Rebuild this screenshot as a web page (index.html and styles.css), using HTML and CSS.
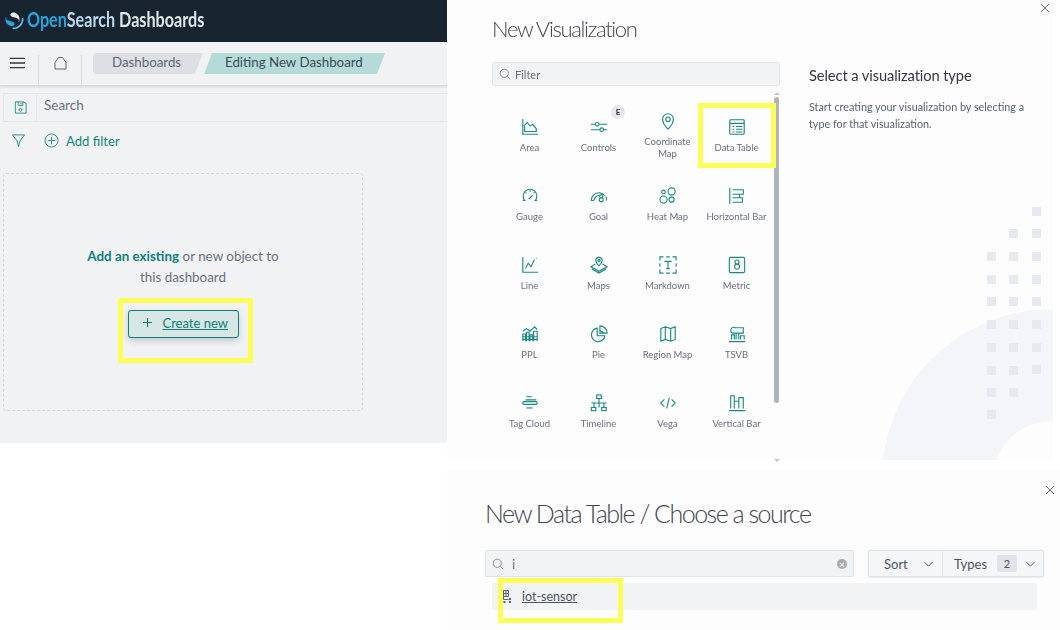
FILE: index.html
```html
<!DOCTYPE html>
<html lang="en">
<head>
<meta charset="utf-8">
<title>OpenSearch Dashboards</title>
<link rel="stylesheet" href="styles.css">
</head>
<body>
<section class="window win-dash">
  <header class="brandbar">
    <svg class="logo" viewBox="0 0 20 20"><path d="M18.6 7.4c-.5 0-.9.4-.9.9 0 5-4 9-9 9-.5 0-.9.4-.9.9s.4.9.9.9c6 0 10.800-4.900 10.800-10.800 0-.5-.4-.9-.9-.9z" fill="#5ec3ea"/><path d="M14.300 12c.6-1 1.200-2.300 1-4.100C15 4.100 11.500 1.300 8.200 1.600 6.900 1.700 5.600 2.800 5.700 4.200c0 .6.300 1 .8 1.300 1 .6 2.300.9 3.800 1.400 1.800.5 3.100 1 4 2 .4.700.3 1.900 0 3.100z" fill="#e8f1f6"/><path d="M1.500 5.500C.9 6.500.3 7.800.5 9.600c.3 3.800 3.800 6.600 7.100 6.300 1.300-.1 2.600-1.200 2.500-2.600 0-.6-.3-1-.8-1.300-1-.6-2.300-.9-3.800-1.400-1.800-.5-3.100-1-4-2-.4-.7-.3-1.900 0-3.100z" fill="#26a5dc"/></svg>
    <span class="brand"><span class="brand-open">Open</span><span class="brand-search">Search</span> Dashboards</span>
  </header>
  <nav class="navrow">
    <div class="navcell cell-menu"><svg class="ic-menu" viewBox="0 0 16 12"><path d="M0 1h16M0 6h16M0 11h16" stroke="#343741" stroke-width="1.400" fill="none"/></svg></div>
    <div class="navcell cell-home"><svg class="ic-home" viewBox="0 0 13 14"><path d="M1 13V6.500L4.500 1.500h4L12 6.500V13z" stroke="#5a6875" stroke-linejoin="round" fill="none"/></svg></div>
    <div class="crumbs">
      <span class="crumb crumb-a">Dashboards</span>
      <span class="crumb crumb-b">Editing New Dashboard</span>
    </div>
  </nav>
  <div class="searchrow">
    <div class="savecell"><svg class="ic16" viewBox="0 0 16 16"><path d="M2.500 2h9.500l2 2v10h-11.500zM5.500 2v4h5V2M8.500 3v2" stroke="#2a8f85" fill="none"/><circle cx="8" cy="10.500" r="1.500" stroke="#2a8f85" fill="none"/></svg></div>
    <div class="searchtext">Search</div>
  </div>
  <div class="filterrow">
    <svg class="ic16" viewBox="0 0 16 16"><path d="M1.500 2h13L9.500 8.500 8 14.500 6.500 8.500z" stroke="#1f8f85" fill="none"/></svg>
    <span class="addfilter"><svg class="ic15" viewBox="0 0 16 16"><circle cx="8" cy="8" r="7" stroke="#1f8f85" fill="none"/><path d="M8 4v8M4 8h8" stroke="#1f8f85" fill="none"/></svg>Add filter</span>
  </div>
  <div class="emptybox">
    <p class="emptytext"><b>Add an existing</b> or new object to<br>this dashboard</p>
    <button class="createbtn"><svg class="ic10" viewBox="0 0 10 10"><path d="M5 0v10M0 5h10" stroke="#0f7a70" stroke-width="1.200" fill="none"/></svg><span>Create new</span></button>
  </div>
  <div class="mark mark-create"></div>
</section>

<section class="window win-vis">
  <svg class="decor" viewBox="0 0 606 460">
    <path d="M436 460A170 170 0 0 1 606 309V421A60 60 0 0 0 549 460Z" fill="#f4f5f9"/>
    <g fill="#e6e9f0">
      <rect x="585" y="207" width="9" height="9"/>
      <rect x="562" y="229" width="9" height="9"/><rect x="585" y="229" width="9" height="9"/>
      <rect x="540" y="252" width="9" height="9"/><rect x="562" y="252" width="9" height="9"/><rect x="585" y="252" width="9" height="9"/>
      <rect x="540" y="275" width="9" height="9"/><rect x="562" y="275" width="9" height="9"/><rect x="585" y="275" width="9" height="9"/>
      <rect x="540" y="297" width="9" height="9"/><rect x="562" y="297" width="9" height="9"/><rect x="585" y="297" width="9" height="9"/>
      <rect x="540" y="320" width="9" height="9"/><rect x="562" y="320" width="9" height="9"/><rect x="585" y="320" width="9" height="9"/>
      <rect x="540" y="343" width="9" height="9"/><rect x="562" y="343" width="9" height="9"/><rect x="585" y="343" width="9" height="9"/>
      <rect x="540" y="366" width="9" height="9"/><rect x="562" y="366" width="9" height="9"/><rect x="585" y="365" width="9" height="9"/>
      <rect x="540" y="388" width="9" height="9"/><rect x="562" y="388" width="9" height="9"/>
      <rect x="540" y="410" width="9" height="9"/>
    </g>
  </svg>
  <div class="vis-main">
    <h1 class="vis-title">New Visualization</h1>
    <div class="filterinput"><svg class="ic12" viewBox="0 0 16 16"><circle cx="7" cy="7" r="5.500" stroke="#69707d" fill="none"/><path d="M11 11l4 4" stroke="#69707d" fill="none"/></svg><span>Filter</span></div>
    <div class="gridwrap">
      <div class="tiles">
        <div class="tile"><svg class="vi" viewBox="0 0 20 20"><path d="M2 1v17h17M4 15V8l3-3 3 4 3-2 4 5v3z"/></svg><span>Area</span></div>
        <div class="tile"><svg class="vi" viewBox="0 0 20 20"><path d="M1 7h5M10 7h9M1 13h10M15 13h4"/><circle cx="8" cy="7" r="2"/><circle cx="13" cy="13" r="2"/></svg><span>Controls</span><i class="badge">E</i></div>
        <div class="tile"><svg class="vi" viewBox="0 0 20 20"><path d="M10 19C6 15 4 11 4 8a6 6 0 0 1 12 0c0 3-2 7-6 11z"/><circle cx="10" cy="8" r="2.500"/></svg><span>Coordinate<br>Map</span></div>
        <div class="tile"><svg class="vi" viewBox="0 0 20 20"><rect x="2" y="2" width="16" height="16" rx="1"/><path d="M2 6h16M5 9.500h2M9 9.500h7M5 12.500h2M9 12.500h7M5 15.500h2M9 15.500h7"/></svg><span>Data Table</span></div>

        <div class="tile"><svg class="vi" viewBox="0 0 20 20"><path d="M4 15A7.500 7.500 0 0 1 2.500 10a7.500 7.500 0 0 1 15 0 7.500 7.500 0 0 1-1.500 5M2 15h3M15 15h3M10 4v1.500M5 6l1 1M15 6l-1 1M8.500 13.500L13 9"/></svg><span>Gauge</span></div>
        <div class="tile"><svg class="vi" viewBox="0 0 20 20"><path d="M1.500 15a8.500 8.500 0 0 1 15-5.500M17.500 10.500a8.500 8.500 0 0 1 1 4.500M4.500 15a5.500 5.500 0 0 1 5.500-5.500M1 15h3"/><path d="M12.500 8.500a1.800 1.800 0 1 1 0 3.600 1.800 1.800 0 1 1 0-3.600zm0 3.600a2.200 2.200 0 1 1 0 4.400 2.200 2.200 0 1 1 0-4.400z"/></svg><span>Goal</span></div>
        <div class="tile"><svg class="vi" viewBox="0 0 20 20"><circle cx="14" cy="5" r="4"/><circle cx="5" cy="5.500" r="2"/><circle cx="5" cy="14" r="4"/><circle cx="14" cy="14" r="2.800"/></svg><span>Heat Map</span></div>
        <div class="tile"><svg class="vi" viewBox="0 0 20 20"><path d="M2 1v18M5 3h12v5H5M5 8h8v4H5M5 12h11v5H5"/></svg><span>Horizontal Bar</span></div>

        <div class="tile"><svg class="vi" viewBox="0 0 20 20"><path d="M2 1v17h17M5 14l3-6 3 4 4-8M17 2l.5.5"/></svg><span>Line</span></div>
        <div class="tile"><svg class="vi" viewBox="0 0 20 20"><path d="M10 11C7.500 8.500 6.500 7 6.500 5a3.500 3.500 0 0 1 7 0c0 2-1 3.500-3.500 6z"/><circle cx="10" cy="5" r="1.200"/><path d="M6 9l-5 3 9 5 9-5-5-3M2 14.500l8 4.500 8-4.500"/></svg><span>Maps</span></div>
        <div class="tile"><svg class="vi" viewBox="0 0 20 20"><path d="M1 5V1h4M8 1h4M15 1h4v4M19 8v4M19 15v4h-4M12 19H8M5 19H1v-4M1 12V8M6 6h8M10 6v8M8 14h4"/></svg><span>Markdown</span></div>
        <div class="tile"><svg class="vi" viewBox="0 0 20 20"><rect x="1.500" y="1.500" width="17" height="17" rx="1.500"/><path d="M10 4.500a2 2 0 1 1 0 4.500 2 2 0 1 1 0-4.500zm0 4.500a2.500 2.500 0 1 1 0 5.500 2.500 2.500 0 1 1 0-5.500z"/></svg><span>Metric</span></div>

        <div class="tile"><svg class="vi" viewBox="0 0 20 20"><path d="M2 7l4-3 4 3 5-5 3 3M2 18V10h3v8M6 18V8h3v10M10 18v-7h3v7M14 18V7h4v11M2 13h16M2 16h16"/></svg><span>PPL</span></div>
        <div class="tile"><svg class="vi" viewBox="0 0 20 20"><path d="M8 3.500a7.500 7.500 0 1 0 8.500 8.500H8zM11 1v8h8a8 8 0 0 0-8-8zM11 6l5 3"/></svg><span>Pie</span></div>
        <div class="tile"><svg class="vi" viewBox="0 0 20 20"><path d="M7 2L2 4v14l5-2 6 2 5-2V2l-5 2zM7 2v14M13 4v14"/></svg><span>Region Map</span></div>
        <div class="tile"><svg class="vi" viewBox="0 0 20 20"><path d="M1 18.500h18M5 9a3 3 0 0 1 3-6h9v6zM4 16v-5h3v5M9 16V9h3v7M14 16v-4h4v4"/></svg><span>TSVB</span></div>

        <div class="tile"><svg class="vi" viewBox="0 0 20 20"><path d="M6 3h6M5 6.500h12"/><rect x="2" y="8.500" width="16" height="3" rx="1.500"/><path d="M6 15.500h7"/></svg><span>Tag Cloud</span></div>
        <div class="tile"><svg class="vi" viewBox="0 0 20 20"><rect x="7.500" y="1" width="5" height="4"/><path d="M10 5v10M1.500 10h17M4.500 10v5M15.500 10v5"/><rect x="1.500" y="15" width="5" height="3.500"/><rect x="13" y="15" width="5" height="3.500"/></svg><span>Timeline</span></div>
        <div class="tile"><svg class="vi" viewBox="0 0 20 20"><path d="M6 6l-4 4 4 4M14 6l4 4-4 4M11.500 4l-3 12"/></svg><span>Vega</span></div>
        <div class="tile"><svg class="vi" viewBox="0 0 20 20"><path d="M1 18.500h18M3 16V2h4v14M7 16V8h5v8M12 16V4h5v12"/></svg><span>Vertical Bar</span></div>
      </div>
      <div class="scroll"><i class="scroll-up"></i><i class="scroll-thumb"></i><i class="scroll-down"></i></div>
    </div>
  </div>
  <aside class="vis-side">
    <h2>Select a visualization type</h2>
    <p>Start creating your visualization by selecting a type for that visualization.</p>
  </aside>
  <svg class="close close-a" viewBox="0 0 10 10"><path d="M1 1l8 8M9 1l-8 8" stroke="#69707d" fill="none"/></svg>
  <div class="mark mark-table"></div>
</section>

<section class="window win-src">
  <h1 class="src-title">New Data Table / Choose a source</h1>
  <div class="src-tools">
    <div class="src-search"><svg class="ic12" viewBox="0 0 16 16"><circle cx="7" cy="7" r="5.500" stroke="#69707d" fill="none"/><path d="M11 11l4 4" stroke="#69707d" fill="none"/></svg><span class="src-q">i</span><i class="clear">×</i></div>
    <div class="src-group">
      <div class="src-btn btn-sort">Sort<svg class="chev" viewBox="0 0 12 7"><path d="M1 1l5 5 5-5" stroke="#4c5563" fill="none"/></svg></div>
      <div class="src-btn btn-types">Types<i class="count">2</i><svg class="chev" viewBox="0 0 12 7"><path d="M1 1l5 5 5-5" stroke="#4c5563" fill="none"/></svg></div>
    </div>
  </div>
  <div class="src-row"><svg class="ic-index" viewBox="0 0 9 14"><path d="M.5.500h5v3h-5zM.5 3.500h5v3h-5zM.5 6.500v3h5M3 .500v6" stroke="#5a6470" fill="none"/><path d="M.5 11h2v2h-2zM6 8h2v2H6zM6 11h2v2H6z" fill="#5a6470"/></svg><span>iot-sensor</span></div>
  <svg class="close close-b" viewBox="0 0 10 10"><path d="M1 1l8 8M9 1l-8 8" stroke="#69707d" fill="none"/></svg>
  <div class="mark mark-source"></div>
</section>
</body>
</html>
```
FILE: styles.css
```css
* { box-sizing: border-box; }
html, body { margin: 0; padding: 0; }
body {
  position: relative;
  width: 1060px;
  height: 630px;
  overflow: hidden;
  background: #fff;
  font-family: "Lato", "Noto Sans", sans-serif;
  color: #343741;
}
.window { position: absolute; }
.mark { position: absolute; border: 5px solid #fdfd58; pointer-events: none; }
svg { display: block; flex: none; }
.ic-menu { width: 15px; height: 12px; }
.ic-home { width: 13px; height: 14px; }
.ic-index { width: 9px; height: 14px; }
.ic16 { width: 15px; height: 15px; }
.ic15 { width: 15px; height: 15px; }
.ic12 { width: 12px; height: 12px; }
.ic10 { width: 9px; height: 9px; }

/* dashboard window */
.win-dash { left: 0; top: 0; width: 447px; height: 443px; background: #f1f2f4; }
.brandbar { height: 42px; background: #182430; display: flex; align-items: center; padding-left: 5px; gap: 3px; }
.logo { width: 19px; height: 19px; margin-top: -2px; }
.brand { font-size: 21px; font-weight: 700; color: #dfe6ec; margin-top: -5px; transform: scaleX(.77); transform-origin: left center; white-space: nowrap; }
.brand-open { color: #26a5dc; }
.brand-search { color: #b9dbea; }
.navrow { height: 44px; display: flex; align-items: flex-start; border-bottom: 1px solid #d8dbe0; box-shadow: 0 1px 2px rgba(60,70,90,.15); }
.navcell { display: flex; align-items: center; justify-content: center; margin-top: 13px; height: 30px; border-right: 1px solid #d5d8dd; padding-bottom: 14px; }
.cell-menu { width: 39px; padding-right: 4px; }
.cell-home { width: 43px; }
.crumbs { display: flex; gap: 1px; margin: 11px 0 0 11px; }
.crumb { height: 21px; display: flex; align-items: center; padding-bottom: 3px; font-size: 13.300px; clip-path: polygon(0 0, 100% 0, calc(100% - 8px) 100%, 0 100%); }
.crumb-a { width: 110px; padding-left: 19px; background: #dcdfe4; color: #5f6773; border-radius: 4px 0 0 4px; }
.crumb-b { width: 181px; padding-left: 21px; background: #b5dbd8; color: #3d4a55; clip-path: polygon(8px 0, 100% 0, calc(100% - 8px) 100%, 0 100%); }
.searchrow { height: 29px; margin: 7px 0 0 3px; display: flex; border: 1px solid #e2e5e9; border-right: 0; }
.savecell { width: 33px; display: flex; align-items: center; justify-content: center; border-right: 1px solid #e4e6ea; }
.searchtext { padding: 3px 0 0 7px; font-size: 13.500px; color: #69707d; }
.filterrow { height: 38px; display: flex; align-items: center; padding-left: 11px; padding-bottom: 1px; gap: 18px; }
.addfilter { display: flex; align-items: center; gap: 7px; font-size: 13.100px; color: #11857c; }
.emptybox { width: 360px; height: 238px; margin: 13px 0 0 3px; border: 1px dashed #d3d6db; border-radius: 3px; display: flex; flex-direction: column; align-items: center; padding-top: 72px; }
.emptytext { margin: 0; font-size: 13.400px; line-height: 21px; text-align: center; color: #69707d; }
.emptytext b { color: #0f7f78; font-weight: 700; }
.createbtn { margin-top: 22px; width: 111px; height: 28px; display: flex; align-items: center; gap: 11px; padding: 0 0 3px 14px; border: 1px solid #0f7f78; border-radius: 3px; background: #d6e6e5; box-shadow: 0 3px 6px rgba(60,90,90,.25); font: inherit; font-size: 13px; color: #0f7f78; }
.createbtn span { text-decoration: underline; }
.mark-create { left: 118px; top: 298px; width: 135px; height: 65px; }

/* visualization window */
.win-vis { left: 447px; top: 0; width: 606px; height: 460px; background: #fdfdfd; display: flex; }
.decor { position: absolute; left: 0; top: 0; width: 606px; height: 460px; }
.vis-main { position: relative; width: 362px; padding: 16px 0 0 45px; flex: none; filter: blur(.35px); }
.vis-title { margin: 0; font-size: 22px; font-weight: 300; line-height: 26px; letter-spacing: -1.350px; color: #3f4750; }
.filterinput { width: 288px; height: 24px; margin-top: 20px; display: flex; align-items: center; gap: 4px; padding-left: 6px; background: #f2f3f5; border: 1px solid #e3e6ea; border-radius: 2px; font-size: 11px; color: #69707d; }
.gridwrap { position: relative; margin-top: 16px; margin-left: 3px; }
.tiles { display: grid; grid-template-columns: repeat(4, 69px); grid-auto-rows: 69px; width: 276px; }
.tile { position: relative; display: flex; flex-direction: column; align-items: center; justify-content: center; padding-bottom: 1px; gap: 6px; text-align: center; font-size: 9.500px; line-height: 12px; color: #69707d; }
.vi { width: 18px; height: 18px; fill: none; stroke: #1a8a80; stroke-width: 1.250; }
.badge { position: absolute; left: 47px; top: 3px; width: 14px; height: 14px; border-radius: 50%; background: #e6e8ec; color: #343741; font: 700 8px/14px "Lato", sans-serif; }
.scroll { position: absolute; left: 279px; top: -10px; width: 5px; height: 368px; }
.scroll-thumb { position: absolute; left: 0; top: 5px; width: 5px; height: 306px; background: #aeb5bc; border-radius: 3px; }
.scroll-up { position: absolute; left: 0; top: 0; border: 3px solid transparent; border-bottom: 3px solid #c4c8ce; border-top: 0; }
.scroll-down { position: absolute; left: 0; bottom: -2px; border: 3px solid transparent; border-top: 3px solid #c4c8ce; border-bottom: 0; }
.vis-side { position: relative; padding: 66px 0 0 0; width: 222px; filter: blur(.3px); }
.vis-side h2 { margin: 0; font-size: 14.700px; font-weight: 400; line-height: 18px; letter-spacing: -.1px; color: #343741; }
.vis-side p { margin: 15px 0 0; font-size: 10.800px; line-height: 16.500px; color: #5a6470; }
.close { position: absolute; width: 10px; height: 10px; }
.close-a { left: 593px; top: 3px; }
.mark-table { left: 251px; top: 103px; width: 78px; height: 65px; }

/* source window */
.win-src { left: 447px; top: 470px; width: 613px; height: 160px; background: #fdfdfd; padding: 27px 0 0 38px; }
.src-title { margin: 0; font-size: 25px; font-weight: 300; line-height: 32px; letter-spacing: -1.500px; color: #3f4750; }
.src-tools { display: flex; gap: 14px; margin-top: 21px; }
.src-search { width: 369px; height: 27px; display: flex; align-items: center; padding: 0 5px 0 6px; background: #f2f3f5; border: 1px solid #dfe4e7; border-radius: 2px; font-size: 13px; color: #69707d; }
.src-q { margin-left: 8px; flex: 1; }
.clear { width: 10px; height: 10px; border-radius: 50%; background: #a6abb3; color: #f2f3f5; font: 700 10px/10px "Lato", sans-serif; text-align: center; margin-right: 1px; }
.src-group { display: flex; width: 176px; height: 27px; border: 1px solid #dfe4e7; box-shadow: 0 1px 2px rgba(60,70,90,.1); border-radius: 2px; background: #f5f6f7; }
.src-btn { display: flex; align-items: center; font-size: 13px; color: #4c5563; }
.btn-sort { width: 74px; padding-left: 15px; border-right: 1px solid #dfe4e7; justify-content: space-between; padding-right: 8px; }
.btn-types { flex: 1; padding-left: 11px; }
.count { width: 20px; height: 17px; margin: 0 8px 0 10px; border-radius: 2px; background: #e0e3e7; font-style: normal; font-size: 11px; line-height: 17px; text-align: center; }
.chev { width: 11px; height: 6px; }
.src-row { width: 545px; height: 27px; margin: 6px 0 0 7px; display: flex; align-items: center; gap: 10px; padding-left: 11px; background: #f2f3f5; border-radius: 3px; font-size: 12.500px; color: #4c5563; }
.src-row span { text-decoration: underline; }
.close-b { left: 598px; top: 15px; }
.mark-source { left: 51px; top: 108px; width: 125px; height: 45px; }
```
